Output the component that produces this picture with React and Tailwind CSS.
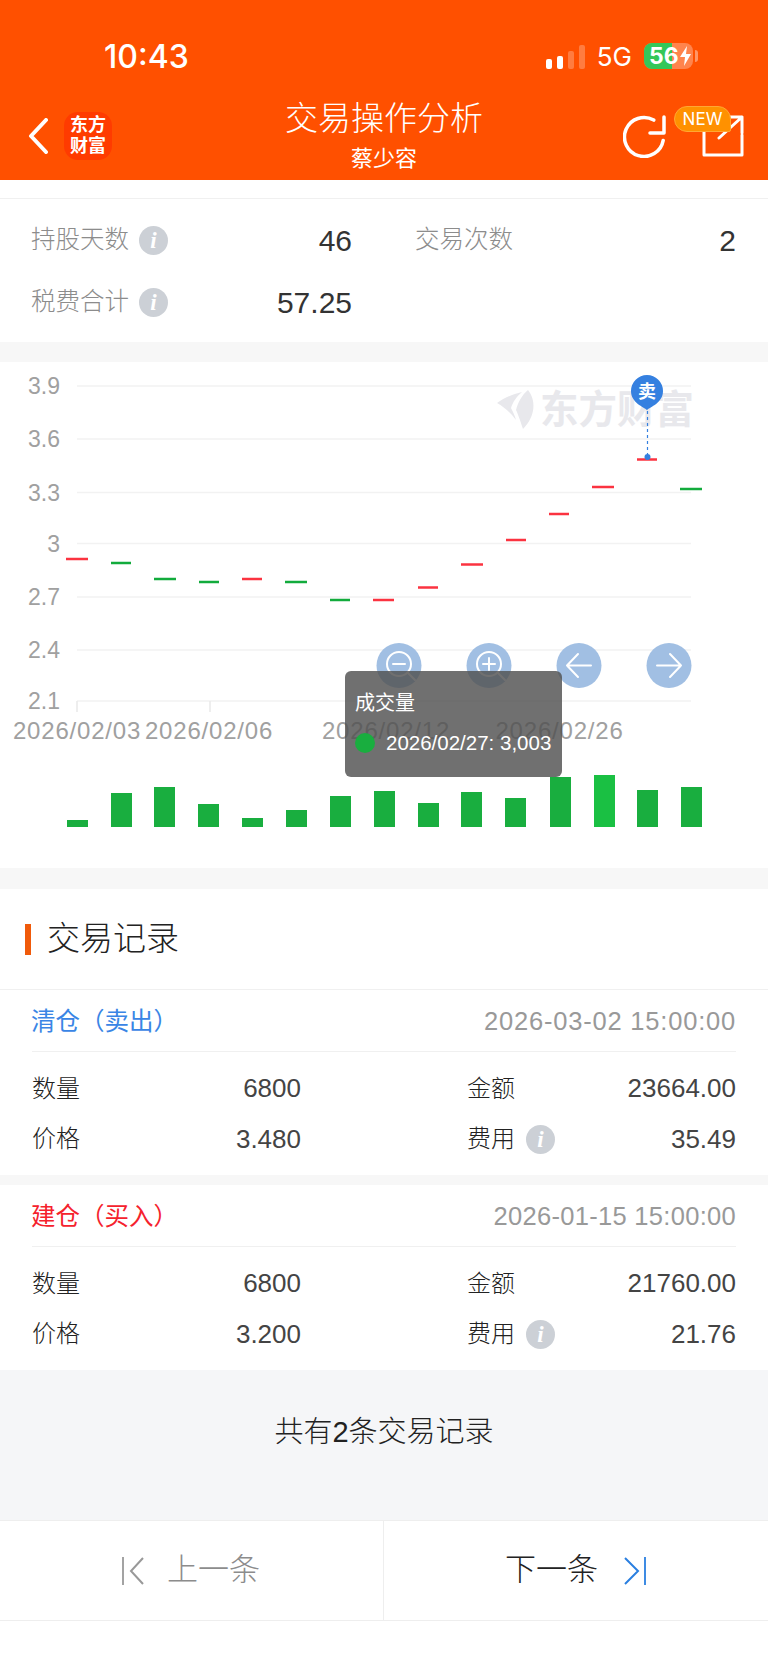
const FONT = "font-['Liberation_Sans','Noto_Sans_CJK_SC',sans-serif]";

const gridY = [386, 439, 492.5, 543.5, 597, 650, 701];
const yLabels = ['3.9', '3.6', '3.3', '3', '2.7', '2.4', '2.1'];

const candles = [
  [66, 88, 559, 'r'], [111, 131, 563, 'g'], [154, 176, 579, 'g'], [199, 219, 582, 'g'], [242, 262, 579, 'r'],
  [285, 307, 582, 'g'], [330, 350, 600, 'g'], [373, 394, 600, 'r'], [418, 438, 587.5, 'r'], [461, 483, 564.5, 'r'],
  [506, 526, 540, 'r'], [549, 569, 514, 'r'], [592, 614, 487, 'r'], [637, 657, 459.5, 'r'], [680, 702, 489, 'g'],
];

const bars = [
  [67, 820], [111, 793], [154, 787], [198, 804], [242, 818], [286, 810], [330, 796], [374, 791],
  [418, 803], [461, 792], [505, 798], [550, 777], [594, 775], [637, 790], [681, 787],
];

const dates = [['2026/02/03', 77], ['2026/02/06', 209], ['2026/02/12', 386], ['2026/02/26', 559.5]];

const InfoIcon = ({ className = '' }) => (
  <span className={"flex h-[29px] w-[29px] items-center justify-center rounded-full bg-[#ccd0d6] font-['Liberation_Serif',serif] text-[23px] font-bold italic leading-none text-white " + className}>i</span>
);

const StatusBar = () => (
  <div className="flex h-[72px] items-center justify-between pl-[104px] pr-[70px] text-white">
    <span className="mt-[2px] font-['Inter',sans-serif] text-[32px] font-medium leading-none">10:43</span>
    <div className="flex items-center">
      <div className="flex h-[35px] items-end gap-[5px] pb-[5px]">
        <span className="h-[10px] w-[6px] rounded-[2px] bg-white" />
        <span className="h-[13px] w-[6px] rounded-[2px] bg-white" />
        <span className="h-[18px] w-[6px] rounded-[2px] bg-white/25" />
        <span className="h-[24px] w-[6px] rounded-[2px] bg-white/25" />
      </div>
      <span className="ml-[12px] mt-[2px] font-['Inter',sans-serif] text-[26px] leading-none">5G</span>
      <div className="relative ml-[12px] flex h-[26px] w-[49px] items-center overflow-hidden rounded-[8px] bg-white/30">
        <span className="absolute inset-y-0 left-0 w-[28px] bg-[#34c759]" />
        <span className="relative ml-[5px] font-['Inter',sans-serif] text-[23px] font-bold leading-none">56</span>
        <svg className="relative" width="13" height="22" viewBox="0 0 13 22"><path d="M8 1 1 12h5l-1 9 7-12H7z" fill="#fff" /></svg>
      </div>
      <span className="ml-[2px] h-[12px] w-[3px] rounded-r-full bg-white/40" />
    </div>
  </div>
);

const NavBar = () => (
  <div className="grid h-[88px] grid-cols-[1fr_auto_1fr] items-center text-white">
    <div className="flex items-center pl-[28px]">
      <svg width="20" height="36" viewBox="0 0 20 36" fill="none"><path d="M18 2 3 18l15 16" stroke="#fff" strokeWidth="4" strokeLinecap="round" strokeLinejoin="round" /></svg>
      <div className="ml-[16px] flex h-[48px] w-[48px] flex-col items-center justify-center rounded-[14px] bg-[#ff3b00] text-[18px] font-bold leading-[21px] text-white">
        <span>东方</span>
        <span>财富</span>
      </div>
    </div>
    <div className="flex flex-col items-center gap-1.5">
      <span className="text-[33px] font-light leading-[40px]">交易操作分析</span>
      <span className="text-[22px] leading-[28px]">蔡少容</span>
    </div>
    <div className="relative flex items-center justify-end pr-[24px]">
      <svg width="44" height="44" viewBox="0 0 44 44" fill="none" className="mr-[35px]">
        <path d="M40.200 26.400A19.500 19.500 0 1 1 30.750 6.100" stroke="#fff" strokeWidth="3.500" strokeLinecap="round" />
        <path d="M41 3v16H27" stroke="#fff" strokeWidth="3.500" strokeLinecap="round" strokeLinejoin="round" />
      </svg>
      <svg width="42" height="42" viewBox="0 0 42 42" fill="none">
        <path d="M2 14v26h38V20" stroke="#fff" strokeWidth="3" strokeLinecap="round" strokeLinejoin="round" />
        <path d="M17 23 40 2M27 2h13v16" stroke="#fff" strokeWidth="3" strokeLinecap="round" strokeLinejoin="round" />
      </svg>
      <span className="absolute -top-[8px] right-[37px] flex h-[26px] w-[57px] items-center justify-center rounded-t-[13px] rounded-bl-[13px] rounded-br-[2px] border border-[#ffa733] bg-[#ff9100] font-['Inter',sans-serif] text-[17px] leading-none text-white">NEW</span>
    </div>
  </div>
);

const Stats = () => (
  <div className="mt-[18px] border-t border-[#f0f0f0] pl-[31px] pr-[32px] pt-[11px] pb-[9px]">
    <div className="flex h-[61px] items-center">
      <div className="flex w-[321px] items-center">
        <span className="text-[24.500px] font-light text-[#8c8c8c]">持股天数</span>
        <InfoIcon className="ml-[10px]" />
        <span className="ml-auto text-[30px] font-light text-[#333]">46</span>
      </div>
      <span className="ml-[63px] text-[24.500px] font-light text-[#8c8c8c]">交易次数</span>
      <span className="ml-auto text-[30px] font-light text-[#333]">2</span>
    </div>
    <div className="flex h-[62px] items-center">
      <div className="flex w-[321px] items-center">
        <span className="text-[24.500px] font-light text-[#8c8c8c]">税费合计</span>
        <InfoIcon className="ml-[10px]" />
        <span className="ml-auto text-[30px] font-light text-[#333]">57.25</span>
      </div>
    </div>
  </div>
);

const Chart = () => (
  <div className="relative h-[506px] bg-white">
    <svg className="block" width="768" height="506" viewBox="0 362 768 506">
      {gridY.map((y, i) => (
        <g key={y}>
          <line x1="77" x2="691" y1={y} y2={y} stroke="#f2f2f2" strokeWidth="1.500" />
          <text x="60" y={y + 8} textAnchor="end" fontSize="23" fill="#a0a0a0">{yLabels[i]}</text>
        </g>
      ))}
      <line x1="77" x2="77" y1="701" y2="712" stroke="#e8e8e8" strokeWidth="1.500" />
      <line x1="210" x2="210" y1="701" y2="712" stroke="#e8e8e8" strokeWidth="1.500" />
      {dates.map(([d, x]) => (
        <text key={d} x={x} y="739" textAnchor="middle" fontSize="24" letterSpacing="0.8" fill="#a0a0a0">{d}</text>
      ))}

      {/* watermark */}
      <path d="M528 390C536 400 536 416 523 429 520 420 518 414 516 410 518 402 522 395 528 390Z" fill="#e8e8ec" />
      <path d="M497 403C504 398 513 394 522 392 516 397 513 402 511 408 513 412 515 416 516 420 510 412 504 407 497 403Z" fill="#e8e8ec" />
      <text x="540" y="423" fontSize="38.500" fontWeight="700" fill="#e8e8ec">东方财富</text>

      {candles.map(([a, b, y, c]) => (
        <line key={a} x1={a} x2={b} y1={y} y2={y} stroke={c === 'r' ? '#fb3340' : '#12ab3c'} strokeWidth="2.500" />
      ))}

      {/* sell marker */}
      <line x1="647.500" x2="647.500" y1="405" y2="455" stroke="#3580e0" strokeWidth="1.200" strokeDasharray="3 3" />
      <circle cx="647.500" cy="457" r="3" fill="#3580e0" />
      <path d="M647 410c-3-3-16-7-16-19a16 16 0 0 1 32 0c0 12-13 16-16 19z" fill="#3580e0" />
      <text x="647" y="398" textAnchor="middle" fontSize="18" fontWeight="700" fill="#fff">卖</text>

      {/* chart buttons */}
      {[399, 489, 579, 669].map((x) => <circle key={x} cx={x} cy="665.500" r="22.500" fill="#a1bfe3" />)}
      <g fill="none" stroke="#fff" strokeWidth="2" strokeLinecap="round" strokeLinejoin="round">
        <circle cx="399" cy="664" r="12" />
        <path d="M393 664h12M408 673l7 7" />
        <circle cx="489" cy="664" r="12" />
        <path d="M483 664h12M489 658v12M498 673l7 7" />
        <path d="M567 665.500h24M578 654l-11 11.500 11 11.500" />
        <path d="M657 665.500h24M670 654l11 11.500-11 11.500" />
      </g>

      {bars.map(([x, top], i) => (
        <rect key={x} x={x} y={top} width="21" height={827 - top} fill={i === 12 ? '#1ac043' : '#19ae3f'} />
      ))}
    </svg>
    <div className="absolute left-[345px] top-[309px] h-[106px] w-[217px] rounded-[6px] bg-[rgba(80,80,80,0.82)] pl-[10px] text-white">
      <div className="mt-[18px] text-[20px] leading-[28px]">成交量</div>
      <div className="mt-[12px] flex items-center">
        <span className="h-[20px] w-[20px] rounded-full bg-[#19ae3f]" />
        <span className="ml-[11px] text-[20.500px] leading-[28px]">2026/02/27: 3,003</span>
      </div>
    </div>
  </div>
);

const Gap = ({ className }) => <div className={'bg-[#f7f7f7] ' + className} />;

const RecordRow = ({ leftLabel, leftValue, rightLabel, rightValue, info, className }) => (
  <div className={'flex items-center ' + className}>
    <div className="flex w-[269px] items-center justify-between">
      <span className="text-[24px] font-light text-[#222]">{leftLabel}</span>
      <span className="text-[26px] text-[#444]">{leftValue}</span>
    </div>
    <span className="ml-[166px] text-[24px] font-light text-[#222]">{rightLabel}</span>
    {info && <InfoIcon className="ml-[11px]" />}
    <span className="ml-auto text-[26px] text-[#444]">{rightValue}</span>
  </div>
);

const Record = ({ title, titleColor, time, timeClass, qty, amount, price, fee }) => (
  <div className="bg-white px-[32px]">
    <div className="flex h-[62px] items-center justify-between border-b border-[#f0f0f0]">
      <span className={'-ml-[1px] mt-[3px] text-[24.500px] ' + titleColor}>{title}</span>
      <span className={'mt-[1px] text-[25.500px] text-[#999] ' + timeClass}>{time}</span>
    </div>
    <RecordRow className="h-[71px] pt-[2px]" leftLabel="数量" leftValue={qty} rightLabel="金额" rightValue={amount} />
    <RecordRow className="h-[52px] pb-[20px]" leftLabel="价格" leftValue={price} rightLabel="费用" rightValue={fee} info />
  </div>
);

const Footer = () => (
  <div className="flex h-[101px] border-y border-[#eeeeee] bg-white">
    <div className="flex w-[384px] items-center justify-center border-r border-[#eeeeee] pr-[2px]">
      <svg width="24" height="30" viewBox="0 0 24 30" fill="none">
        <path d="M2 1v28" stroke="#999" strokeWidth="1.800" />
        <path d="M22 2 10 15l12 13" stroke="#999" strokeWidth="2" />
      </svg>
      <span className="ml-[22px] text-[31px] font-light text-[#8c8c8c]">上一条</span>
    </div>
    <div className="flex flex-1 items-center justify-center">
      <span className="text-[31px] font-light text-[#222]">下一条</span>
      <svg className="ml-[25px]" width="24" height="30" viewBox="0 0 24 30" fill="none">
        <path d="M2 2l13 13L2 28" stroke="#2a7fe0" strokeWidth="2" />
        <path d="M22 1v28" stroke="#2a7fe0" strokeWidth="1.800" />
      </svg>
    </div>
  </div>
);

export default function App() {
  return (
    <div className={FONT + ' h-[1663px] w-[768px] overflow-hidden bg-white'}>
      <header className="h-[180px] bg-[#ff5000] pt-[20px]">
        <StatusBar />
        <NavBar />
      </header>
      <Stats />
      <Gap className="h-[20px]" />
      <Chart />
      <Gap className="h-[21px]" />
      <div className="flex h-[101px] items-center border-b border-[#f0f0f0] pl-[25px]">
        <span className="h-[31px] w-[6px] bg-[#f05a0a]" />
        <span className="ml-[16px] text-[33px] font-light text-[#222]">交易记录</span>
      </div>
      <Record title="清仓（卖出）" titleColor="text-[#3a85e5]" timeClass="tracking-[0.8px]" time="2026-03-02 15:00:00" qty="6800" amount="23664.00" price="3.480" fee="35.49" />
      <Gap className="h-[10px]" />
      <Record title="建仓（买入）" titleColor="text-[#f5222d]" timeClass="tracking-[0.3px]" time="2026-01-15 15:00:00" qty="6800" amount="21760.00" price="3.200" fee="21.76" />
      <div className="flex h-[150px] items-start justify-center bg-[#f5f6f8] pt-[42px]">
        <span className="text-[29px] font-light leading-[40px] text-[#222]">共有2条交易记录</span>
      </div>
      <Footer />
    </div>
  );
}
